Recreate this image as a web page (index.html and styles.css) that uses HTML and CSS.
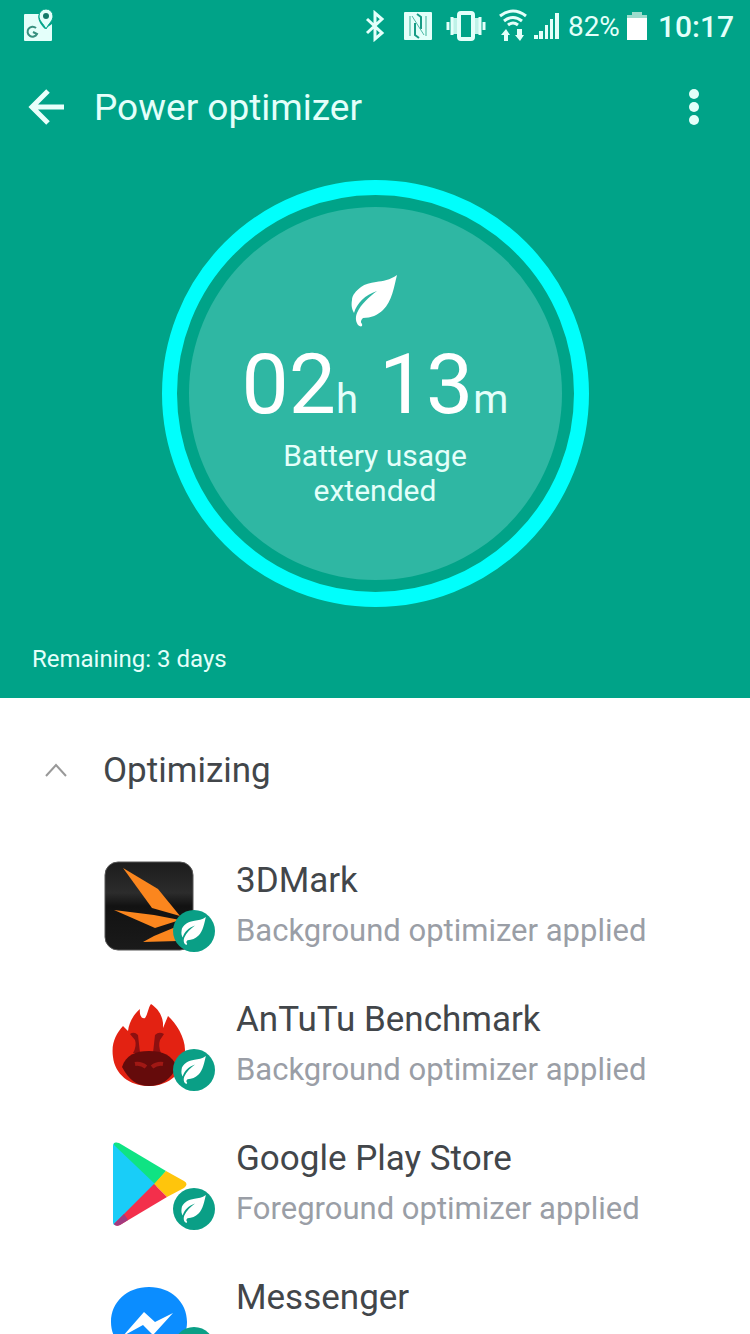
FILE: index.html
```html
<!DOCTYPE html>
<html lang="en">

<head>
  <meta charset="UTF-8">
  <meta name="viewport" content="width=device-width, initial-scale=1.0">
  <title>Power optimizer</title>
  <link rel="stylesheet" href="styles.css">
</head>

<body>
  <!-- shared leaf shape -->
  <svg class="symbols" aria-hidden="true">
    <symbol id="leaf" viewBox="0 0 48 52">
      <path d="M46 0C39 5 32 6 25 7C19 8 14 9 10 12C5 16 1 20 1 25C0 31 1 34 3 38C6 28 14 20 26 16C18 22 10 29 6 38C4 43 5 47 7 50C9 52 12 52 11 49C9 47 10 45 12 43C20 43 27 40 32 35C41 26 43 12 46 0Z" />
    </symbol>
  </svg>

  <div class="screen">
    <header class="hero">
      <div class="status-bar">
        <svg class="map-icon" width="32" height="34" viewBox="0 0 32 34">
          <path fill="#e4fffa" d="M3 5H17C15 10 18 15 23 20L30 15V31Q30 32 29 32H3Q2 32 2 31V6Q2 5 3 5Z" />
          <path fill="#e4fffa" d="M24 0a7 7 0 0 1 7 7c0 5-4 7-7 13c-3-6-7-8-7-13a7 7 0 0 1 7-7Z" stroke="#00a388" stroke-width="1" />
          <circle cx="24" cy="7" r="3" fill="#147a69" />
          <path d="M14 19A5 5 0 1 0 15 25L11 23" fill="none" stroke="#38907f" stroke-width="2" />
        </svg>
        <div class="status-right">
          <svg width="20" height="32" viewBox="0 0 20 32">
            <path d="M2 9L17 23L10 29V3L17 9L2 23" fill="none" stroke="#e4fffa" stroke-width="3" />
          </svg>
          <svg class="nfc" width="30" height="30" viewBox="0 0 30 30">
            <rect x="1" y="1" width="28" height="28" rx="1" fill="#e4fffa" />
            <path d="M7 5V25M23 5V25" fill="none" stroke="#8fd8c9" stroke-width="2" />
            <path d="M12 12V24L16 27M18 18V6L14 3" fill="none" stroke="#179c86" stroke-width="2" />
            <path d="M9 5L21 24" fill="none" stroke="#4fb9a6" stroke-width="1" />
          </svg>
          <svg class="vibrate" width="40" height="32" viewBox="0 0 40 32">
            <path fill="#bff2e8" d="M7 8H11V24H7ZM29 8H33V24H29Z" />
            <rect x="13" y="3" width="14" height="26" rx="2" fill="none" stroke="#e4fffa" stroke-width="4" />
            <path d="M6 7V25M34 7V25" stroke="#e4fffa" stroke-width="3" />
            <path d="M2 12V20M38 12V20" stroke="#e4fffa" stroke-width="3" />
          </svg>
          <svg class="wifi" width="30" height="34" viewBox="0 0 30 34">
            <g fill="none" stroke="#e4fffa" stroke-width="3">
              <path d="M2 7Q15-3 28 7" />
              <path d="M6 12Q15 5 24 12" />
              <path d="M10 16Q15 12 20 16" />
            </g>
            <path fill="#e4fffa" d="M6 32V26H3L8 20L12 26H10V32ZM19 20H24V26H26L22 32L17 26H19Z" />
          </svg>
          <svg width="26" height="28" viewBox="0 0 26 28">
            <path fill="#e4fffa" d="M0 23H4V27H0ZM5 19H9V27H5ZM11 13H14V27H11ZM16 7H19V27H16ZM21 1H25V27H21Z" />
          </svg>
          <span class="percent">82%</span>
          <svg width="22" height="30" viewBox="0 0 22 30">
            <path fill="#9cdccc" d="M6 1H16V4H21V9H1V4H6Z" />
            <path fill="#fff" d="M1 7H21V29H1Z" />
          </svg>
          <span class="clock">10:17</span>
        </div>
      </div>

      <nav class="app-bar">
        <button class="icon-button" type="button" aria-label="Back">
          <svg width="38" height="38" viewBox="0 0 38 38">
            <path d="M20 3L4 19L20 35M4 19H36" fill="none" stroke="#e9fffb" stroke-width="5" />
          </svg>
        </button>
        <h1>Power optimizer</h1>
        <button class="icon-button more" type="button" aria-label="More options">
          <svg width="12" height="38" viewBox="0 0 12 38">
            <g fill="#e4fffa">
              <circle cx="6" cy="6" r="5" />
              <circle cx="6" cy="19" r="5" />
              <circle cx="6" cy="32" r="5" />
            </g>
          </svg>
        </button>
      </nav>

      <div class="ring">
        <div class="dial">
          <svg class="leaf" width="48" height="52"><use href="#leaf" /></svg>
          <div class="time">02<small>h</small> 13<small>m</small></div>
          <p>Battery usage<br>extended</p>
        </div>
      </div>

      <p class="remaining">Remaining: 3 days</p>
    </header>

    <main>
      <button class="section-toggle" type="button" aria-expanded="true">
        <svg width="22" height="14" viewBox="0 0 22 14">
          <path d="M1 13L11 2L21 13" fill="none" stroke="#999" stroke-width="2" />
        </svg>
        <span>Optimizing</span>
      </button>

      <ul class="app-list">
        <li>
          <div class="app-icon">
            <svg width="90" height="90" viewBox="0 0 90 90">
              <defs>
                <linearGradient id="dark" x1="0" y1="0" x2="0" y2="1">
                  <stop offset="0" stop-color="#1c1c1c" />
                  <stop offset=".35" stop-color="#2c2c2c" />
                  <stop offset=".5" stop-color="#121212" />
                  <stop offset="1" stop-color="#1a1a1a" />
                </linearGradient>
              </defs>
              <rect x="1" y="1" width="88" height="88" rx="13" fill="url(#dark)" stroke="#555" stroke-width="1" />
              <g fill="#fb861e">
                <path d="M19 7L54 28L76 55L48 47Z" />
                <path d="M10 49L50 54L76 59L51 67Z" />
                <path d="M39 81L50 75L74 65V80Z" />
              </g>
            </svg>
            <span class="badge"><svg width="26" height="28"><use href="#leaf" /></svg></span>
          </div>
          <div class="app-text">
            <h2>3DMark</h2>
            <p>Background optimizer applied</p>
          </div>
        </li>
        <li>
          <div class="app-icon">
            <svg width="90" height="90" viewBox="0 0 90 90">
              <path fill="#e32212" d="M9 57C7 43 12 34 19 26L24 31C25 23 29 15 36 9C35 16 38 19 41 18C44 14 44 8 47 4C53 8 58 14 59 23V28L64 16C72 23 81 37 81 50C81 73 65 86 45 86C25 86 11 74 9 57Z" />
              <g fill="#8d1010">
                <path d="M26 34Q30 31 34 35L36 53H29Q33 46 31 40Z" />
                <path d="M60 34Q55 31 51 35L49 53H57Q54 46 56 40Z" />
              </g>
              <path fill="#650b0b" d="M18 67C22 55 31 51 45 51S68 55 73 67C66 80 57 86 45 86S25 80 18 67Z" />
              <path d="M31 64Q37 63 42 67M59 64Q53 63 48 67" fill="none" stroke="#a01814" stroke-width="4" />
            </svg>
            <span class="badge"><svg width="26" height="28"><use href="#leaf" /></svg></span>
          </div>
          <div class="app-text">
            <h2>AnTuTu Benchmark</h2>
            <p>Background optimizer applied</p>
          </div>
        </li>
        <li>
          <div class="app-icon">
            <svg width="90" height="90" viewBox="0 0 90 90">
              <path fill="#19cdf8" d="M9 7Q9 3 13 4L55 45L13 86Q9 87 9 83Z" />
              <path fill="#0fe383" d="M10 4Q12 3 15 4L62 32L51 45L10 6Z" />
              <path fill="#ffc50c" d="M62 32L80 42Q85 45 80 49L63 58L50 45Z" />
              <path fill="#f32f4b" d="M50 45L63 58L16 86Q12 88 10 85Z" />
              <path fill="#a13b80" d="M10 85L20 75L24 81L16 86Q12 88 10 85Z" />
            </svg>
            <span class="badge"><svg width="26" height="28"><use href="#leaf" /></svg></span>
          </div>
          <div class="app-text">
            <h2>Google Play Store</h2>
            <p>Foreground optimizer applied</p>
          </div>
        </li>
        <li>
          <div class="app-icon">
            <svg width="90" height="90" viewBox="0 0 90 90">
              <path fill="#0b8dff" d="M45 9C23 9 7 24 7 44C7 56 13 66 22 72V86L35 78C61 84 83 67 83 44C83 24 67 9 45 9Z" />
              <path fill="#fff" d="M19 58L40 34L51 44L69 35L49 57L39 47Z" />
            </svg>
            <span class="badge"><svg width="26" height="28"><use href="#leaf" /></svg></span>
          </div>
          <div class="app-text">
            <h2>Messenger</h2>
          </div>
        </li>
      </ul>
    </main>
  </div>
</body>

</html>
```

FILE: styles.css
```css
* {
  box-sizing: border-box;
  margin: 0;
  padding: 0;
}

body {
  font-family: Roboto, "Noto Sans", sans-serif;
  background: #fff;
  color: #42464a;
}

button {
  border: none;
  background: none;
  font: inherit;
  color: inherit;
  cursor: pointer;
}

svg {
  display: block;
  flex: none;
}

.symbols {
  display: none;
}

.screen {
  height: 100vh;
  overflow: hidden;
}

/* green header */
.hero {
  background: #00a388;
  color: #e4fffa;
}

.status-bar {
  display: flex;
  justify-content: space-between;
  align-items: center;
  height: 52px;
  padding: 0 16px 0 22px;
}

.status-right {
  display: flex;
  align-items: center;
}

.nfc {
  margin-left: 18px;
}

.vibrate {
  margin-left: 13px;
}

.wifi {
  margin: 0 6px 0 12px;
}

.percent {
  margin: 0 6px 0 8px;
  font-size: 28px;
}

.clock {
  margin-left: 10px;
  font-size: 30px;
  font-weight: 500;
}

.app-bar {
  display: flex;
  align-items: center;
  height: 110px;
  padding: 0 50px 0 28px;
}

.app-bar h1 {
  flex: 1;
  margin-left: 28px;
  padding-top: 2px;
  font-size: 37px;
  font-weight: 400;
  line-height: 44px;
}

/* circular dial */
.ring {
  width: 427px;
  height: 427px;
  margin: 18px auto 0;
  padding: 12px;
  border: 15px solid #00fffc;
  border-radius: 50%;
}

.dial {
  display: flex;
  flex-direction: column;
  align-items: center;
  height: 100%;
  padding-top: 68px;
  border-radius: 50%;
  background: #2fb7a3;
  text-align: center;
}

.leaf {
  fill: #fff;
}

.time {
  margin-top: 12px;
  font-size: 84px;
  line-height: 92px;
  color: #fff;
  white-space: nowrap;
}

.time small {
  font-size: 40px;
  color: #e4fffa;
}

.dial p {
  margin-top: -8px;
  font-size: 30px;
  line-height: 35px;
}

.remaining {
  padding: 36px 32px 23px;
  font-size: 24px;
  line-height: 32px;
}

/* app list */
.section-toggle {
  display: flex;
  align-items: center;
  gap: 36px;
  width: 100%;
  height: 140px;
  padding: 4px 45px 0;
  font-size: 35px;
  text-align: left;
}

.app-list {
  list-style: none;
}

.app-list li {
  display: flex;
  gap: 42px;
  height: 139px;
  padding: 23px 24px 0 104px;
}

.app-icon {
  position: relative;
  width: 90px;
  height: 90px;
}

.badge {
  position: absolute;
  right: -21px;
  bottom: -1px;
  display: flex;
  align-items: center;
  justify-content: center;
  width: 42px;
  height: 42px;
  border-radius: 50%;
  background: #0a9f86;
  fill: #fff;
}

.app-text {
  padding-top: 2px;
}

.app-text h2 {
  font-size: 35px;
  font-weight: 400;
  line-height: 36px;
}

.app-text p {
  margin-top: 14px;
  font-size: 31px;
  line-height: 36px;
  color: #9a9ea6;
}
```
